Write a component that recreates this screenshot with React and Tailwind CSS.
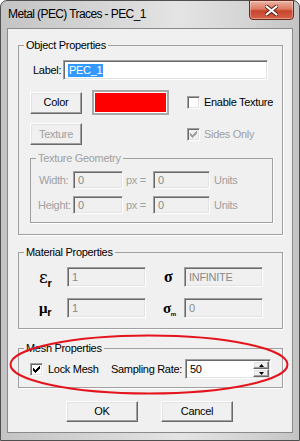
import React from 'react';

const raised =
  'border border-t-white border-l-white border-r-[#696969] border-b-[#696969] shadow-[inset_-1px_-1px_0_#a0a0a0,inset_1px_1px_0_#e3e3e3]';
const sunken =
  'border border-t-[#a0a0a0] border-l-[#a0a0a0] border-r-white border-b-white shadow-[inset_1px_1px_0_#696969,inset_-1px_-1px_0_#e3e3e3]';

const Btn = ({ children, disabled, className = '' }) => (
  <div className={`flex items-center justify-center bg-[#f0f0f0] ${raised} ${disabled ? 'text-[#a0a0a0]' : 'text-black'} ${className}`}>
    {children}
  </div>
);

const Field = ({ children, disabled, className = '' }) => (
  <div className={`flex items-center pl-[4px] ${sunken} ${disabled ? 'bg-[#f0f0f0] text-[#8a8a8a]' : 'bg-white text-black'} ${className}`}>
    {children}
  </div>
);

const Check = ({ checked, disabled }) => (
  <div className={`w-[13px] h-[13px] flex items-center justify-center ${sunken} ${disabled ? 'bg-[#f0f0f0]' : 'bg-white'}`}>
    {checked && (
      <svg width="7" height="7" viewBox="0 0 7 7" shapeRendering="crispEdges">
        <path d="M6 0h1v3h-1v1h-1v1h-1v1h-1v1h-1v-1h-1v-1h-1v-3h1v1h1v1h1v-1h1v-1h1z" fill={disabled ? '#a0a0a0' : '#000'} />
      </svg>
    )}
  </div>
);

// group box: etched grey line with a white line beside it
const Group = ({ title, disabled, className = '', children }) => (
  <fieldset className={`border border-[#a0a0a0] shadow-[1px_1px_0_#fff] ${className}`}>
    <legend className={`ml-[5px] px-[2px] leading-[13px] ${disabled ? 'text-[#a0a0a0]' : 'text-black'}`}>{title}</legend>
    {children}
  </fieldset>
);

export default function App() {
  return (
    <div className="relative w-[300px] h-[441px] overflow-hidden bg-white font-['Liberation_Sans',Arial,sans-serif] text-[11px] tracking-[-0.3px]">
      <div className="w-full h-full flex flex-col rounded-t-[7px] border border-[#4f4f4f] bg-[linear-gradient(90deg,#c4c4c4_0%,#d6d6d6_35%,#e4e4e4_60%,#d2d2d2_85%,#c4c4c4_100%)]">
        {/* Title bar */}
        <div className="h-[27px] flex items-start justify-between shrink-0">
          <span className="ml-[7px] mt-[7px] text-[12px] leading-[13px] tracking-[-0.6px] text-black">Metal (PEC) Traces - PEC_1</span>
          <div className="mr-[5px] -mt-[1px] w-[45px] h-[20px] rounded-b-[4px] border border-[#6b2a20] bg-[linear-gradient(180deg,#eab3a3_0%,#dd7a62_45%,#c8442c_55%,#d4624a_100%)] shadow-[inset_0_0_0_1px_rgba(255,255,255,0.35)] flex items-center justify-center">
            <svg width="13" height="11" viewBox="0 0 13 11">
              <path d="M1.5 1.5 L11.5 9.5 M11.5 1.5 L1.5 9.5" stroke="#5a1d14" strokeWidth="4" strokeLinecap="round" />
              <path d="M1.5 1.5 L11.5 9.5 M11.5 1.5 L1.5 9.5" stroke="#fff" strokeWidth="2.2" strokeLinecap="round" />
            </svg>
          </div>
        </div>

        {/* Client area */}
        <div className="mx-[6px] h-[405px] border border-[#8a8a8a] bg-[#f0f0f0] flex flex-col shrink-0">
          <Group title="Object Properties" className="mt-[10px] ml-[10px] w-[265px] h-[196px]">
            <div className="mt-[8px] flex items-center h-[20px]">
              <span className="ml-[14px] w-[30px]">Label:</span>
              <Field className="w-[205px] h-[20px]">
                <span className="bg-[#3399ff] text-white leading-[13px] px-[1px]">PEC_1</span>
              </Field>
            </div>
            <div className="mt-[10px] flex items-center h-[25px]">
              <Btn className="ml-[11px] w-[52px] h-[22px]">Color</Btn>
              <div className="ml-[10px] w-[77px] h-[25px] border-2 border-[#a8a8a8] bg-white p-[1px]">
                <div className="w-full h-full bg-[#ff0000]" />
              </div>
              <div className="ml-[18px]"><Check /></div>
              <span className="ml-[4px]">Enable Texture</span>
            </div>
            <div className="mt-[8px] flex items-center h-[22px]">
              <Btn disabled className="ml-[11px] w-[52px] h-[22px]">Texture</Btn>
              <div className="ml-[105px]"><Check checked disabled /></div>
              <span className="ml-[4px] text-[#a0a0a0]">Sides Only</span>
            </div>
            <Group title="Texture Geometry" disabled className="mt-[7px] ml-[11px] w-[243px] h-[71px]">
              <div className="mt-[6px] flex items-center h-[18px] text-[#a0a0a0]">
                <span className="ml-[8px] w-[34px]">Width:</span>
                <Field disabled className="w-[50px] h-[18px]">0</Field>
                <span className="ml-[3px] w-[27px]">px =</span>
                <Field disabled className="w-[57px] h-[18px]">0</Field>
                <span className="ml-[4px]">Units</span>
              </div>
              <div className="mt-[7px] flex items-center h-[18px] text-[#a0a0a0]">
                <span className="ml-[7px] w-[35px]">Height:</span>
                <Field disabled className="w-[50px] h-[18px]">0</Field>
                <span className="ml-[3px] w-[27px]">px =</span>
                <Field disabled className="w-[57px] h-[18px]">0</Field>
                <span className="ml-[4px]">Units</span>
              </div>
            </Group>
          </Group>

          <Group title="Material Properties" className="mt-[11px] ml-[10px] w-[265px] h-[83px]">
            <div className="mt-[8px] flex items-center h-[20px]">
              <div className="ml-[20px] w-[28px] flex items-end">
                <span className="font-['DejaVu_Serif',serif] text-[17px] leading-none">ε</span>
                <span className="font-bold text-[11px] leading-none -mb-[3px]">r</span>
              </div>
              <Field disabled className="w-[79px] h-[20px]">1</Field>
              <div className="ml-[18px] w-[20px] flex items-end">
                <span className="font-['Liberation_Serif',serif] font-bold text-[16px] leading-none">σ</span>
              </div>
              <Field disabled className="w-[79px] h-[20px]">INFINITE</Field>
            </div>
            <div className="mt-[11px] flex items-center h-[20px]">
              <div className="ml-[20px] w-[28px] flex items-end">
                <span className="font-['Liberation_Serif',serif] font-bold text-[15px] leading-none">μ</span>
                <span className="font-bold text-[11px] leading-none -mb-[2px]">r</span>
              </div>
              <Field disabled className="w-[79px] h-[20px]">1</Field>
              <div className="ml-[17px] w-[21px] flex items-end">
                <span className="font-['Liberation_Serif',serif] font-bold text-[15px] leading-none">σ</span>
                <span className="font-bold text-[6px] leading-none -mb-[1px]">m</span>
              </div>
              <Field disabled className="w-[79px] h-[20px]">0</Field>
            </div>
          </Group>

          <Group title="Mesh Properties" className="mt-[13px] ml-[10px] w-[265px] h-[46px]">
            <div className="mt-[4px] flex items-center h-[20px]">
              <div className="ml-[11px]"><Check checked /></div>
              <span className="ml-[5px] w-[63px]">Lock Mesh</span>
              <span className="w-[74px]">Sampling Rate:</span>
              <div className={`w-[86px] h-[20px] flex items-center bg-white ${sunken}`}>
                <span className="flex-1 pl-[4px]">50</span>
                <div className="w-[16px] h-[16px] mr-[1px] flex flex-col">
                  <div className={`h-[8px] bg-[#f0f0f0] flex items-center justify-center ${raised}`}>
                    <svg width="5" height="3" viewBox="0 0 5 3"><path d="M2.5 0 L5 3 L0 3 Z" fill="#000" /></svg>
                  </div>
                  <div className={`h-[8px] bg-[#f0f0f0] flex items-center justify-center ${raised}`}>
                    <svg width="5" height="3" viewBox="0 0 5 3"><path d="M0 0 L5 0 L2.5 3 Z" fill="#000" /></svg>
                  </div>
                </div>
              </div>
            </div>
          </Group>

          <div className="mt-[13px] flex items-center">
            <Btn className="ml-[58px] w-[72px] h-[21px]">OK</Btn>
            <Btn className="ml-[23px] w-[72px] h-[21px]">Cancel</Btn>
          </div>
        </div>
      </div>

      {/* red highlight drawn over the dialog */}
      <svg className="absolute left-[9px] top-[334px]" width="281" height="62" viewBox="0 0 281 62">
        <ellipse cx="140" cy="30.5" rx="138.5" ry="29" fill="none" stroke="#e5141c" strokeWidth="2" />
      </svg>
    </div>
  );
}
